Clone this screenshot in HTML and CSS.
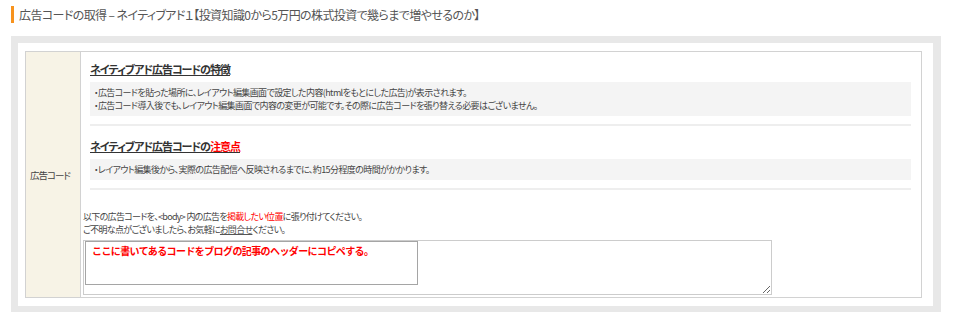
FILE: index.html
```html
<!DOCTYPE html>
<html lang="ja">
<head>
    <meta charset="UTF-8">
    <meta name="viewport" content="width=device-width, initial-scale=1.0">
    <title>広告コードの取得</title>
    <link rel="stylesheet" href="styles.css">
</head>
<body>
    <div class="page">
        <h2 class="page-title">広告コードの取得 – ネイティブアド１【投資知識0から5万円の株式投資で幾らまで増やせるのか】</h2>
        <div class="frame">
            <div class="frame-inner">
                <table class="code-table">
                    <tr>
                        <th>広告コード</th>
                        <td>
                            <div class="section">
                                <h3 class="section-title">ネイティブアド広告コードの特徴</h3>
                                <div class="note-box">
                                    <p>・広告コードを貼った場所に、レイアウト編集画面で設定した内容(htmlをもとにした広告)が表示されます。</p>
                                    <p>・広告コード導入後でも、レイアウト編集画面で内容の変更が可能です。その際に広告コードを張り替える必要はございません。</p>
                                </div>
                            </div>
                            <div class="section">
                                <h3 class="section-title">ネイティブアド広告コードの<span class="red">注意点</span></h3>
                                <div class="note-box">
                                    <p>・レイアウト編集後から、実際の広告配信へ反映されるまでに、約15分程度の時間がかかります。</p>
                                </div>
                            </div>
                            <p class="howto">以下の広告コードを、&lt;body&gt; 内の広告を<span class="red">掲載したい位置</span>に張り付けてください。<br>
                            ご不明な点がございましたら、お気軽に<a href="#">お問合せ</a>ください。</p>
                            <div class="code-wrap">
                                <textarea class="code-area" readonly></textarea>
                                <div class="memo">ここに書いてあるコードをブログの記事のヘッダーにコピペする。</div>
                            </div>
                        </td>
                    </tr>
                </table>
            </div>
        </div>
    </div>
</body>
</html>
```

FILE: styles.css
```css
body {
    margin: 0;
    font-family: "Noto Sans CJK JP", "Noto Sans", sans-serif;
    color: #444;
    font-feature-settings: "palt";
}
.page {
    padding: 5px 15px 0 11px;
}
.page-title {
    margin: 1px 0 13px;
    padding-left: 5px;
    border-left: 3px solid #f7931e;
    font-size: 12px;
    line-height: 17px;
    font-weight: normal;
    color: #555;
    letter-spacing: -0.6px;
}
.frame {
    background: #e8e8e8;
    padding: 7px 8px 6px 7px;
}
.frame-inner {
    background: #fff;
    padding: 8px 11px 8px 7px;
}
.code-table {
    width: 100%;
    border-collapse: collapse;
    border: 1px solid #d2d2d2;
}
.code-table th {
    width: 50px;
    background: #f7f3e6;
    border-right: 1px solid #d2d2d2;
    font-size: 9.5px;
    font-weight: normal;
    text-align: left;
    padding: 0 0 0 4px;
    color: #444;
    letter-spacing: -1px;
}
.code-table td {
    padding: 10px 0 2px 2px;
}
.section {
    margin: 0 10px 0 7px;
    padding-bottom: 8px;
    border-bottom: 2px solid #eee;
    margin-bottom: 13px;
}
.section-title {
    margin: 0 0 6px;
    font-size: 11px;
    line-height: 14px;
    color: #333;
    text-decoration: underline;
    letter-spacing: -1px;
}
.note-box {
    background: #f4f4f4;
    padding: 4px 0 4px 4px;
}
.note-box p {
    margin: 0;
    font-size: 9px;
    line-height: 13px;
    letter-spacing: -0.6px;
}
.red {
    color: #f00;
}
.howto {
    margin: 20px 0 4px;
    font-size: 9px;
    line-height: 13px;
    letter-spacing: -0.7px;
}
.howto a {
    color: #555;
}
.code-wrap {
    position: relative;
    width: 689px;
}
.code-area {
    display: block;
    width: 689px;
    height: 55px;
    box-sizing: border-box;
    border: 1px solid #ccc;
    margin: 0;
    padding: 0;
}
.memo {
    position: absolute;
    left: 2px;
    top: 1px;
    width: 333px;
    height: 44px;
    box-sizing: border-box;
    border: 1px solid #a5a5a5;
    background: #fff;
    padding: 1px 6px;
    color: #f00;
    font-size: 10px;
    font-weight: bold;
    line-height: 16px;
    letter-spacing: -0.6px;
    font-feature-settings: normal;
}
```
